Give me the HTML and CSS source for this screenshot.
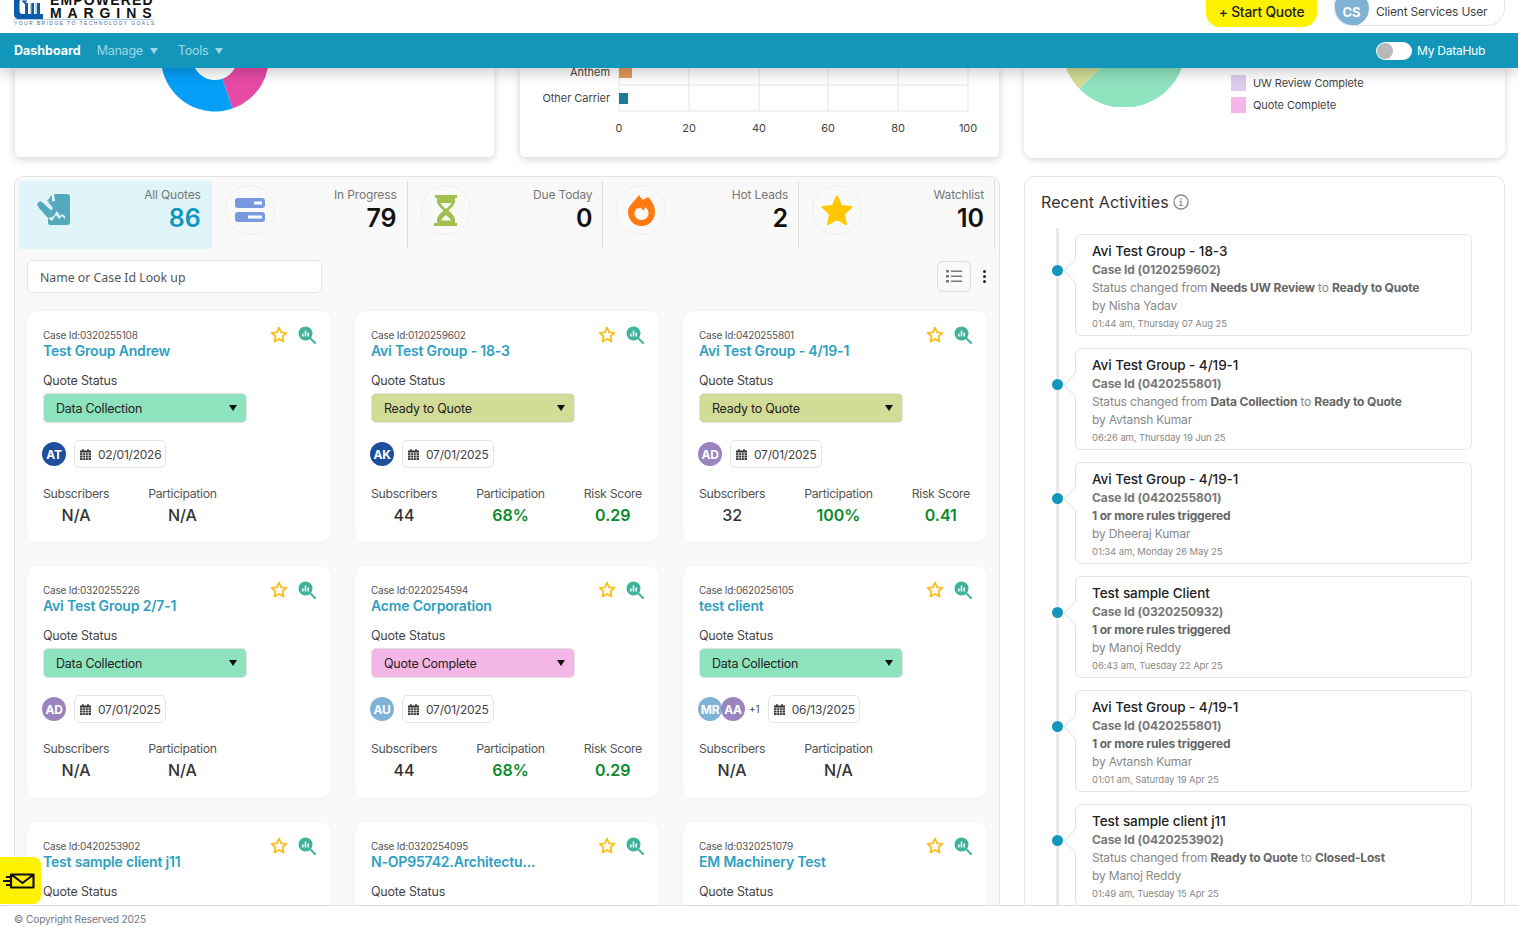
FILE: index.html
```html
<!DOCTYPE html>
<html lang="en">
<head>
<meta charset="utf-8">
<title>Dashboard</title>
<link rel="stylesheet" href="styles.css">
</head>
<body>
<svg class="defs" width="0" height="0" aria-hidden="true">
  <defs>
    <symbol id="star-o" viewBox="0 0 18 18"><path d="M9 1.600l2.200 4.700 5.100.6-3.800 3.500 1 5.100L9 13l-4.500 2.500 1-5.100L1.700 6.900l5.100-.6z" fill="none" stroke="#fbbc14" stroke-width="1.800" stroke-linejoin="round"/></symbol>
    <symbol id="seek" viewBox="0 0 18 18"><circle cx="7.500" cy="7.500" r="7" fill="#3fb39a"/><path d="M12 12l5 5" stroke="#3fb39a" stroke-width="2" stroke-linecap="round"/><path d="M4.800 7.500v3M7.500 4.500v6M10.200 6.500v4" stroke="#fff" stroke-width="1.500"/></symbol>
    <symbol id="cal" viewBox="0 0 12 12"><path fill="#333" d="M2.500 0h1.500v1.500h4V0h1.500v1.500H12V12H0V1.500h2.500z"/><path stroke="#fff" stroke-width=".7" d="M0 4.200h12M0 6.900h12M0 9.500h12M3 4v8M6 4v8M9 4v8"/></symbol>
  </defs>
</svg>
<div class="app">
  <header class="header">
    <div class="topbar">
      <div class="logo">
        <div class="logo-row">
          <svg class="logo-mark" width="32" height="24" viewBox="0 0 32 24"><path fill="#0d5cab" d="M0 4C0 1.500 1.500 0 4 0h28v4H9C6.500 4 5.500 5.500 5.500 7v8c0 3 1 4 3.500 4h2V8h3v11h3V8h3v11h3V8h3v11h3v5H5C2 24 0 22 0 19z"/><path fill="#7fb2d4" d="M16.500 8h1v11h-1zM21.500 8h1v11h-1z"/><path fill="#0d5cab" d="M7.500 5.500h6l-3 3.500z"/></svg>
          <div class="logo-text">
            <div class="logo-a">EMPOWERED</div>
            <div class="logo-b">MARGINS</div>
          </div>
        </div>
        <div class="logo-c">YOUR BRIDGE TO TECHNOLOGY GOALS</div>
      </div>
      <div class="top-actions">
        <button class="start">+ Start Quote</button>
        <div class="user"><span class="user-av">CS</span><span class="user-name">Client Services User</span></div>
      </div>
    </div>
    <nav class="nav">
      <a class="nav-item on">Dashboard</a>
      <a class="nav-item">Manage<i class="tri"></i></a>
      <a class="nav-item">Tools<i class="tri"></i></a>
      <div class="hub"><span class="toggle"><span class="knob"></span></span><span>My DataHub</span></div>
    </nav>
  </header>

  <main class="main">
    <div class="cols">
      <div class="col-left">
        <div class="charts">
          <section class="chart chart-donut">
            <svg width="108" height="44" viewBox="0 10.500 108 44">
              <path fill="#069ff8" d="M54 -54A54 54 0 1 0 71.700 51L61.400 21.200A22.500 22.500 0 1 1 54 -22.500z"/>
              <path fill="#e64aa5" d="M54 -54A54 54 0 0 1 71.700 51L61.400 21.200A22.500 22.500 0 0 0 54 -22.500z"/>
            </svg>
          </section>
          <section class="chart chart-bars">
            <svg width="479" height="89" viewBox="0 0 479 89">
              <g class="grid">
                <path d="M99 0v43M169 0v43M239 0v43M308 0v43M378 0v43M448 0v43"/>
                <path d="M99 17h349M99 43h349"/>
              </g>
              <rect x="99" y="0" width="13" height="10" fill="#e79a5a"/>
              <rect x="99" y="25" width="9" height="11" fill="#1f7a96"/>
              <text class="lbl" x="90" y="8" text-anchor="end">Anthem</text>
              <text class="lbl" x="90" y="34" text-anchor="end">Other Carrier</text>
              <g class="lbl" text-anchor="middle">
                <text x="99" y="64">0</text><text x="169" y="64">20</text><text x="239" y="64">40</text><text x="308" y="64">60</text><text x="378" y="64">80</text><text x="448" y="64">100</text>
              </g>
            </svg>
          </section>
        </div>
        <section class="panel">
          <div class="kpis">
            <div class="kpi active">
              <span class="kpi-ic"><svg width="36" height="34" viewBox="0 0 36 34"><path fill="#55a9bd" d="M16 2l-5 6 5 1V2zM18 1h13c2 0 3 1 3 3v25c0 2-1 3-3 3H14c-1 0-2-1-2-2v-5l4 3 4-6 3 4 3-3 3 3v-3l-3-2-2 2-3-5-4 6-4-3 4-6-5-6 7-1z"/><path fill="#55a9bd" d="M1 11l3-3 3 2 11 10-2 4-4 1L3 15z"/></svg></span>
              <div class="kpi-txt"><span class="kpi-l">All Quotes</span><span class="kpi-v">86</span></div>
            </div>
            <div class="kpi">
              <span class="kpi-ic"><svg width="30" height="24" viewBox="0 0 30 24"><rect width="30" height="10" rx="3" fill="#7799dd"/><rect y="14" width="30" height="10" rx="3" fill="#7799dd"/><rect x="19" y="3.500" width="8" height="3" fill="#fff"/><rect x="13" y="17.500" width="14" height="3" fill="#fff"/></svg></span>
              <div class="kpi-txt"><span class="kpi-l">In Progress</span><span class="kpi-v dark">79</span></div>
            </div>
            <div class="kpi">
              <span class="kpi-ic"><svg width="24" height="31" viewBox="0 0 24 31"><path fill="#a3bf4f" d="M1 0h22v3h-2v3c0 4-4 7-6.500 9.500C17 18 21 21 21 25v3h2v3H0v-3h3v-3c0-4 4-7 6.500-9.500C7 13 3 10 3 6V3H1zM6.500 8c1 2 3.500 4 5.500 6 2-2 4.500-4 5.500-6zM12 20c-2 1.500-4 3.500-5 5.500h10c-1-2-3-4-5-5.500z"/></svg></span>
              <div class="kpi-txt"><span class="kpi-l">Due Today</span><span class="kpi-v dark">0</span></div>
            </div>
            <div class="kpi">
              <span class="kpi-ic"><svg width="27" height="31" viewBox="0 0 27 31"><path fill="#ff7a0f" fill-rule="evenodd" d="M11 0c1 2 3 4 4 5l5-3c4 4 7 9 7 15 0 8-6 14-13.500 14S0 25 0 17C0 10 7 6 11 0zM9 13c-1.500 2-2.500 3.500-2.500 5.500 0 3.500 3 6.500 7 6.500s7-3 7-6.500c0-2.500-1-4.500-3-6.500-.5 2-1.500 3-3 3.500 0-1-1-2-2-3-1 1-2 1.500-3.500.5z"/></svg></span>
              <div class="kpi-txt"><span class="kpi-l">Hot Leads</span><span class="kpi-v dark">2</span></div>
            </div>
            <div class="kpi">
              <span class="kpi-ic"><svg width="32" height="31" viewBox="0 0 32 31"><path fill="#ffc800" stroke="#ffc800" stroke-width="2" stroke-linejoin="round" d="M16 1.500l4.300 9.400 10.200 1.200-7.600 6.900 2.100 10.100-9-5.100-9 5.100 2.100-10.100-7.600-6.900 10.200-1.200z"/></svg></span>
              <div class="kpi-txt"><span class="kpi-l">Watchlist</span><span class="kpi-v dark">10</span></div>
            </div>
          </div>

          <div class="tools">
            <div class="search">Name or Case Id Look up</div>
            <span class="view-btn"><svg width="16" height="13" viewBox="0 0 16 13"><path fill="#777" d="M0 0h3v2.500H0zM0 5h3v2.500H0zM0 10h3v2.500H0zM5 .5h11v1.500H5zM5 5.500h11V7H5zM5 10.500h11V12H5z"/></svg></span>
            <span class="more"><i></i><i></i><i></i></span>
          </div>

          <div class="cards">
            <article class="card">
              <div class="card-head"><div><div class="case">Case Id:0320255108</div><div class="name">Test Group Andrew</div></div><div class="card-ic"><svg width="18" height="18"><use href="#star-o"/></svg><svg width="18" height="18"><use href="#seek"/></svg></div></div>
              <div class="qs">Quote Status</div>
              <div class="sel green">Data Collection<i class="tri dark"></i></div>
              <div class="people"><span class="av navy">AT</span><span class="date"><svg width="11" height="11"><use href="#cal"/></svg>02/01/2026</span></div>
              <div class="stats"><div class="stat"><span>Subscribers</span><b>N/A</b></div><div class="stat"><span>Participation</span><b>N/A</b></div></div>
            </article>
            <article class="card">
              <div class="card-head"><div><div class="case">Case Id:0120259602</div><div class="name">Avi Test Group - 18-3</div></div><div class="card-ic"><svg width="18" height="18"><use href="#star-o"/></svg><svg width="18" height="18"><use href="#seek"/></svg></div></div>
              <div class="qs">Quote Status</div>
              <div class="sel olive">Ready to Quote<i class="tri dark"></i></div>
              <div class="people"><span class="av navy">AK</span><span class="date"><svg width="11" height="11"><use href="#cal"/></svg>07/01/2025</span></div>
              <div class="stats"><div class="stat"><span>Subscribers</span><b>44</b></div><div class="stat"><span>Participation</span><b class="good">68%</b></div><div class="stat"><span>Risk Score</span><b class="good">0.29</b></div></div>
            </article>
            <article class="card">
              <div class="card-head"><div><div class="case">Case Id:0420255801</div><div class="name">Avi Test Group - 4/19-1</div></div><div class="card-ic"><svg width="18" height="18"><use href="#star-o"/></svg><svg width="18" height="18"><use href="#seek"/></svg></div></div>
              <div class="qs">Quote Status</div>
              <div class="sel olive">Ready to Quote<i class="tri dark"></i></div>
              <div class="people"><span class="av violet">AD</span><span class="date"><svg width="11" height="11"><use href="#cal"/></svg>07/01/2025</span></div>
              <div class="stats"><div class="stat"><span>Subscribers</span><b>32</b></div><div class="stat"><span>Participation</span><b class="good">100%</b></div><div class="stat"><span>Risk Score</span><b class="good">0.41</b></div></div>
            </article>
            <article class="card">
              <div class="card-head"><div><div class="case">Case Id:0320255226</div><div class="name">Avi Test Group 2/7-1</div></div><div class="card-ic"><svg width="18" height="18"><use href="#star-o"/></svg><svg width="18" height="18"><use href="#seek"/></svg></div></div>
              <div class="qs">Quote Status</div>
              <div class="sel green">Data Collection<i class="tri dark"></i></div>
              <div class="people"><span class="av violet">AD</span><span class="date"><svg width="11" height="11"><use href="#cal"/></svg>07/01/2025</span></div>
              <div class="stats"><div class="stat"><span>Subscribers</span><b>N/A</b></div><div class="stat"><span>Participation</span><b>N/A</b></div></div>
            </article>
            <article class="card">
              <div class="card-head"><div><div class="case">Case Id:0220254594</div><div class="name">Acme Corporation</div></div><div class="card-ic"><svg width="18" height="18"><use href="#star-o"/></svg><svg width="18" height="18"><use href="#seek"/></svg></div></div>
              <div class="qs">Quote Status</div>
              <div class="sel pink">Quote Complete<i class="tri dark"></i></div>
              <div class="people"><span class="av sky">AU</span><span class="date"><svg width="11" height="11"><use href="#cal"/></svg>07/01/2025</span></div>
              <div class="stats"><div class="stat"><span>Subscribers</span><b>44</b></div><div class="stat"><span>Participation</span><b class="good">68%</b></div><div class="stat"><span>Risk Score</span><b class="good">0.29</b></div></div>
            </article>
            <article class="card">
              <div class="card-head"><div><div class="case">Case Id:0620256105</div><div class="name">test client</div></div><div class="card-ic"><svg width="18" height="18"><use href="#star-o"/></svg><svg width="18" height="18"><use href="#seek"/></svg></div></div>
              <div class="qs">Quote Status</div>
              <div class="sel green">Data Collection<i class="tri dark"></i></div>
              <div class="people"><span class="av sky">MR</span><span class="av violet overlap">AA</span><span class="plus">+1</span><span class="date"><svg width="11" height="11"><use href="#cal"/></svg>06/13/2025</span></div>
              <div class="stats"><div class="stat"><span>Subscribers</span><b>N/A</b></div><div class="stat"><span>Participation</span><b>N/A</b></div></div>
            </article>
            <article class="card">
              <div class="card-head"><div><div class="case">Case Id:0420253902</div><div class="name">Test sample client j11</div></div><div class="card-ic"><svg width="18" height="18"><use href="#star-o"/></svg><svg width="18" height="18"><use href="#seek"/></svg></div></div>
              <div class="qs">Quote Status</div>
            </article>
            <article class="card">
              <div class="card-head"><div><div class="case">Case Id:0320254095</div><div class="name">N-OP95742.Architectu...</div></div><div class="card-ic"><svg width="18" height="18"><use href="#star-o"/></svg><svg width="18" height="18"><use href="#seek"/></svg></div></div>
              <div class="qs">Quote Status</div>
            </article>
            <article class="card">
              <div class="card-head"><div><div class="case">Case Id:0320251079</div><div class="name">EM Machinery Test</div></div><div class="card-ic"><svg width="18" height="18"><use href="#star-o"/></svg><svg width="18" height="18"><use href="#seek"/></svg></div></div>
              <div class="qs">Quote Status</div>
            </article>
          </div>
        </section>
      </div>

      <div class="col-right">
        <section class="chart chart-pie">
          <svg class="pie" width="124" height="39" viewBox="0 23 124 39">
            <path fill="#8fe3bf" d="M62 0L124 0A62 62 0 0 1 17.300 43.700z"/>
            <path fill="#d2dc96" d="M62 0L17.300 43.700A62 62 0 0 1 0 0z"/>
          </svg>
          <ul class="legend">
            <li><i class="sw lilac"></i>UW Review Complete</li>
            <li><i class="sw rose"></i>Quote Complete</li>
          </ul>
        </section>
        <section class="activity">
          <h2 class="act-title">Recent Activities<svg width="16" height="16" viewBox="0 0 16 16"><circle cx="8" cy="8" r="7" fill="none" stroke="#888" stroke-width="1.300"/><path d="M8 4.200v1.500M6.500 7.300H8v4.200M6.500 11.500h3.200" fill="none" stroke="#888" stroke-width="1.200"/></svg></h2>
          <div class="timeline">
            <div class="item"><div class="t">Avi Test Group - 18-3</div><div class="cid">Case Id (0120259602)</div><div class="msg">Status changed from <b>Needs UW Review</b> to <b>Ready to Quote</b></div><div class="msg">by Nisha Yadav</div><div class="when">01:44 am, Thursday 07 Aug 25</div></div>
            <div class="item"><div class="t">Avi Test Group - 4/19-1</div><div class="cid">Case Id (0420255801)</div><div class="msg">Status changed from <b>Data Collection</b> to <b>Ready to Quote</b></div><div class="msg">by Avtansh Kumar</div><div class="when">06:26 am, Thursday 19 Jun 25</div></div>
            <div class="item"><div class="t">Avi Test Group - 4/19-1</div><div class="cid">Case Id (0420255801)</div><div class="msg"><b>1 or more rules triggered</b></div><div class="msg">by Dheeraj Kumar</div><div class="when">01:34 am, Monday 26 May 25</div></div>
            <div class="item"><div class="t">Test sample Client</div><div class="cid">Case Id (0320250932)</div><div class="msg"><b>1 or more rules triggered</b></div><div class="msg">by Manoj Reddy</div><div class="when">06:43 am, Tuesday 22 Apr 25</div></div>
            <div class="item"><div class="t">Avi Test Group - 4/19-1</div><div class="cid">Case Id (0420255801)</div><div class="msg"><b>1 or more rules triggered</b></div><div class="msg">by Avtansh Kumar</div><div class="when">01:01 am, Saturday 19 Apr 25</div></div>
            <div class="item"><div class="t">Test sample client j11</div><div class="cid">Case Id (0420253902)</div><div class="msg">Status changed from <b>Ready to Quote</b> to <b>Closed-Lost</b></div><div class="msg">by Manoj Reddy</div><div class="when">01:49 am, Tuesday 15 Apr 25</div></div>
          </div>
        </section>
      </div>
    </div>
    <button class="mail" aria-label="Messages"><svg width="32" height="16" viewBox="0 0 32 16"><path d="M8 1.500h22.500v13H8zM9 2l10.500 8L30 2" fill="none" stroke="#111" stroke-width="2.200" stroke-linejoin="round"/><path d="M3 4h5M0 8h7M3 12h5" stroke="#111" stroke-width="1.800"/></svg></button>
  </main>

  <footer class="footer">© Copyright Reserved 2025</footer>
</div>
</body>
</html>
```

FILE: styles.css
```css
* { box-sizing: border-box; }
html, body { margin: 0; height: 100%; }
body { font-family: Inter, "Noto Sans", sans-serif; color: #333; background: #fff; overflow: hidden; }
.defs { position: absolute; }
.app { display: flex; flex-direction: column; height: 927px; }

.header { flex: none; position: relative; z-index: 5; box-shadow: 0 4px 14px rgba(0,0,0,.22); }
.topbar { height: 33px; background: #fff; display: flex; justify-content: space-between; padding: 0 13px 0 14px; overflow: hidden; }
.logo { width: 139px; margin-top: -5px; height: 38px; flex: none; }
.logo-row { display: flex; gap: 4px; height: 25px; border-bottom: 1px solid #a9cbe8; }
.logo-mark { flex: none; }
.logo-text { font-family: "Liberation Sans", sans-serif; color: #111; font-weight: 700; }
.logo-a { font-size: 14px; line-height: 10px; height: 13px; letter-spacing: 1.150px; white-space: nowrap; }
.logo-b { font-size: 14px; line-height: 10px; letter-spacing: 5.900px; white-space: nowrap; }
.logo-c { font-family: "Liberation Sans", sans-serif; font-size: 5px; line-height: 7px; letter-spacing: 1.400px; color: #3a6ea5; white-space: nowrap; }
.top-actions { display: flex; align-items: flex-start; gap: 17px; }
.start { width: 111px; height: 27px; background: #fff200; border: 0; border-radius: 0 0 14px 14px; font: 500 13.800px Inter, sans-serif; color: #222; padding: 0 0 3px; white-space: nowrap; letter-spacing: -.2px; }
.user { width: 171px; height: 26px; display: flex; align-items: center; background: #fff; border: 1px solid #e6e6e6; border-top: 0; border-radius: 0 0 18px 18px; overflow: hidden; }
.user-av { width: 35px; height: 35px; margin-top: -9px; margin-left: -1px; flex: none; background: #7fb2d4; color: #fff; border-radius: 50%; font-weight: 700; font-size: 13px; display: flex; align-items: center; justify-content: center; padding-top: 7px; }
.user-name { margin: -2px 0 0 7px; font-size: 12px; color: #444; white-space: nowrap; letter-spacing: -.2px; }

.nav { height: 35px; background: #1297bb; display: flex; align-items: center; padding: 0 33px 0 14px; gap: 16px; font-size: 12.500px; color: #a3d6e4; letter-spacing: -.25px; }
.nav-item { display: flex; align-items: center; }
.nav-item.on { color: #fff; font-weight: 700; letter-spacing: 0; }
.tri { display: inline-block; width: 0; height: 0; margin: 0 4px 0 7px; border-left: 4px solid transparent; border-right: 4px solid transparent; border-top: 6px solid #a3d6e4; }
.tri.dark { border-top-color: #111; margin: 0 0 0 auto; }
.hub { margin-left: auto; display: flex; align-items: center; gap: 5px; color: #fff; font-size: 12px; letter-spacing: -.25px; }
.toggle { width: 36px; height: 18px; background: #fff; border-radius: 9px; display: flex; padding: 1px; }
.knob { width: 16px; height: 16px; border-radius: 50%; background: #b8b8b8; }

.main { flex: 1; min-height: 0; overflow: hidden; position: relative; background: #fff; }
.cols { display: grid; grid-template-columns: 986px 481px; gap: 24px; padding-left: 14px; }
.charts { display: flex; gap: 26px; padding: 0 1px; margin-bottom: 19px; }
.chart { height: 89px; background: #fff; border-radius: 0 0 5px 5px; box-shadow: 0 2px 9px rgba(0,0,0,.18); overflow: hidden; }
.chart-donut { width: 479px; padding-left: 146px; }
.chart-bars { width: 479px; }
.chart svg { display: block; }
.grid path { stroke: #e6e6e6; stroke-width: 1; fill: none; }
.lbl { font-family: Inter, sans-serif; font-size: 11px; fill: #444; letter-spacing: -.05px; }
.chart-pie { display: flex; height: 90px; margin-bottom: 18px; border-radius: 0 0 10px 10px; padding-left: 38px; box-shadow: 0 2px 7px rgba(0,0,0,.14); }
.pie { flex: none; }
.legend { list-style: none; margin: 7px 0 0 45px; padding: 0; font-size: 11px; color: #444; letter-spacing: -.1px; }
.legend li { display: flex; align-items: center; height: 16px; margin-bottom: 6px; gap: 7px; white-space: nowrap; }
.sw { width: 15px; height: 16px; }
.lilac { background: #dccdee; }
.rose { background: #f3b6e6; }

.panel { background: #f9f9f9; border: 1px solid #e4e4e4; border-radius: 10px 10px 0 0; padding: 4px 12px 0; }
.kpis { display: flex; gap: 3px; margin: 0 -8px 11px; }
.kpi { width: 193px; height: 68px; display: flex; justify-content: space-between; padding: 4px 10px 0 10px; border-right: 1px solid #ddd; }
.kpi.active { background: #dff5f9; border-right: 0; padding-right: 11px; }
.kpi-ic { width: 50px; height: 50px; flex: none; border: 1px solid #efefef; border-radius: 50%; display: flex; align-items: center; justify-content: center; }
.kpi-txt { display: flex; flex-direction: column; align-items: flex-end; }
.kpi-l { font-size: 12px; color: #777; margin-top: 2px; line-height: 15px; letter-spacing: -.15px; }
.kpi-v { font-size: 25px; line-height: 30px; font-weight: 600; color: #1297bb; margin-top: 1px; }
.kpi-v.dark { color: #111; }

.tools { display: flex; align-items: center; margin: 0 -10px 18px 0; height: 33px; }
.search { width: 295px; height: 33px; background: #fff; border: 1px solid #e6e6e6; border-radius: 6px; padding-left: 12px; font: 12.300px/33px "Noto Sans", sans-serif; color: #555; }
.view-btn { margin-left: auto; width: 34px; height: 31px; border: 1px solid #ddd; border-radius: 6px; display: flex; align-items: center; justify-content: center; }
.more { width: 26px; display: flex; flex-direction: column; align-items: center; gap: 2px; }
.more i { width: 3px; height: 3px; background: #222; border-radius: 50%; }

.cards { display: grid; grid-template-columns: repeat(3, 304px); gap: 24px; }
.card { background: #fff; border-radius: 10px; min-height: 231.300px; padding: 17px 16px 0; box-shadow: 0 0 4px rgba(0,0,0,.04); }
.card-head { display: flex; justify-content: space-between; height: 35px; }
.case { font-size: 10px; line-height: 14px; color: #555; letter-spacing: -.2px; }
.name { font-size: 14px; line-height: 18px; font-weight: 600; color: #2e9fc0; letter-spacing: -.18px; white-space: nowrap; }
.card-ic { display: flex; gap: 10px; margin: -2px -1px 0 0; }
.qs { margin-top: 10px; font-size: 12.500px; line-height: 16px; color: #444; letter-spacing: -.2px; }
.sel { margin-top: 4px; width: 204px; height: 30px; border: 1px solid #e2e2e2; border-radius: 5px; display: flex; align-items: center; padding: 0 9px 0 12px; font-size: 12.500px; color: #222; letter-spacing: -.25px; }
.green { background: #8ee3bf; }
.olive { background: #d2dc96; }
.pink { background: #f3b6e6; }
.people { display: flex; align-items: center; margin-top: 17px; height: 28px; margin-left: -1px; }
.av { width: 24px; height: 24px; flex: none; border-radius: 50%; color: #fff; font-size: 12px; font-weight: 700; display: flex; align-items: center; justify-content: center; letter-spacing: -.3px; }
.navy { background: #1f4f9c; }
.violet { background: #9b84bd; }
.sky { background: #7fb2d4; }
.overlap { margin-left: -1px; }
.plus { font-size: 10px; margin-left: 4px; color: #444; }
.date { margin-left: 8px; height: 28px; padding: 0 4px 0 5px; display: inline-flex; align-items: center; gap: 7px; background: #fff; border: 1px solid #e6e6e6; border-radius: 5px; font-size: 12px; color: #444; letter-spacing: -.22px; }
.stats { display: flex; gap: 39px; margin-top: 18px; }
.stat { display: flex; flex-direction: column; align-items: center; white-space: nowrap; }
.stat span { font-size: 12.300px; line-height: 16px; color: #555; letter-spacing: -.33px; }
.stat b { margin-top: 3px; font-size: 16px; line-height: 20px; font-weight: 500; color: #333; }
.stat b.good { color: #0c8a2b; font-weight: 600; }

.activity { background: #fff; border: 1px solid #e4e4e4; border-radius: 10px 10px 0 0; padding: 13px 32px 0 16px; height: 760px; }
.act-title { margin: 0 0 14px; height: 24px; display: flex; align-items: center; gap: 4px; font-size: 16px; font-weight: 400; color: #333; letter-spacing: .1px; }
.timeline { position: relative; padding-left: 34px; padding-top: 6px; display: flex; flex-direction: column; gap: 12px; }
.timeline::before { content: ""; position: absolute; left: 14.500px; top: 0; bottom: 0; width: 3px; background: #e8ecef; }
.item { position: relative; height: 102px; border: 1px solid #e4e4e4; border-radius: 6px; background: #fff; padding: 7px 0 0 16px; }
.item::before { content: ""; position: absolute; left: -9px; top: 27px; width: 17px; height: 17px; background: #fff; border-left: 1px solid #e4e4e4; border-bottom: 1px solid #e4e4e4; transform: rotate(45deg); }
.item::after { content: ""; position: absolute; left: -24px; top: 30px; width: 11px; height: 11px; border-radius: 50%; background: #1297bb; }
.t { position: relative; font-size: 13.500px; line-height: 19px; font-weight: 500; color: #222; letter-spacing: -.05px; }
.cid { position: relative; font-size: 12px; line-height: 18px; font-weight: 700; color: #777; letter-spacing: -.1px; }
.msg { font-size: 12px; line-height: 18px; color: #888; letter-spacing: -.17px; }
.msg b { font-weight: 700; color: #666; }
.when { font-size: 9.500px; line-height: 18px; color: #888; letter-spacing: -.1px; }

.mail { position: absolute; left: 0; bottom: 1px; width: 41px; height: 47px; background: #fff200; border: 0; border-radius: 0 8px 8px 0; padding: 0 0 0 3px; display: flex; align-items: center; }

.footer { flex: none; height: 22px; position: relative; background: #fff; border-top: 1px solid #ddd; padding: 6px 0 0 14px; font-size: 10.200px; line-height: 14px; color: #777; letter-spacing: -.15px; }
```
